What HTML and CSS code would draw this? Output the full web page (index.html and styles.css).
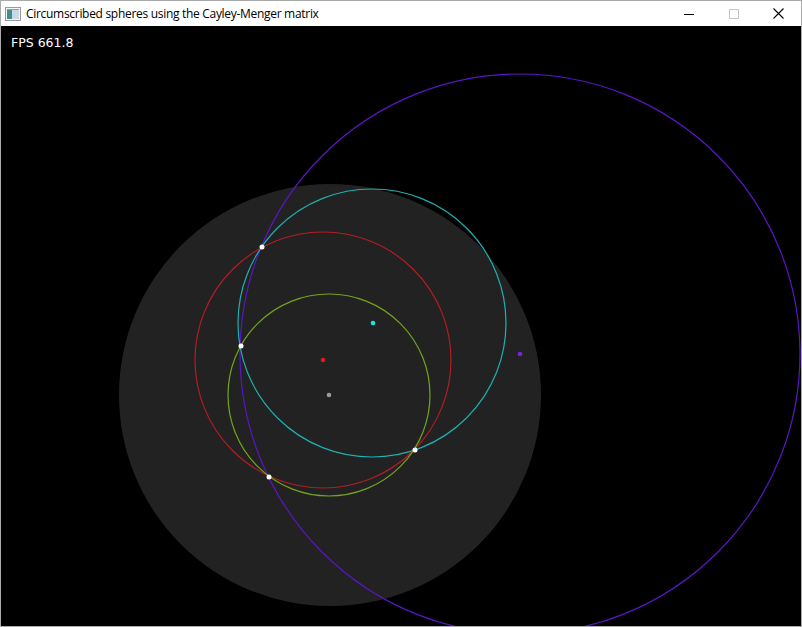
FILE: index.html
```html
<!DOCTYPE html>
<html>
<head>
<meta charset="utf-8">
<link rel="stylesheet" href="styles.css">
</head>
<body>
<div class="window">
  <div class="titlebar">
    <svg class="app-icon" width="16" height="16" viewBox="0 0 16 16">
      <rect x="0.5" y="1.5" width="15" height="13" fill="#f4f4f4" stroke="#9a9a9a"/>
      <rect x="2" y="4" width="5" height="9" fill="#3f8f8a"/>
      <rect x="7" y="4" width="7" height="9" fill="#c9d7e6"/>
      <rect x="2" y="3" width="12" height="1" fill="#7aa7c7"/>
    </svg>
    <span class="title">Circumscribed spheres using the Cayley-Menger matrix</span>
    <div class="controls">
      <div class="ctl"><svg width="10" height="10" viewBox="0 0 10 10"><line x1="0" y1="5.5" x2="10" y2="5.5" stroke="#000" stroke-width="1"/></svg></div>
      <div class="ctl"><svg width="10" height="10" viewBox="0 0 10 10"><rect x="0.5" y="0.5" width="9" height="9" fill="none" stroke="#c8c8c8"/></svg></div>
      <div class="ctl"><svg width="11" height="11" viewBox="0 0 11 11"><path d="M0.5 0.5 L10.5 10.5 M10.5 0.5 L0.5 10.5" stroke="#000" stroke-width="1.1"/></svg></div>
    </div>
  </div>
  <div class="canvas">
    <svg class="scene" width="800" height="600" viewBox="0 0 800 600">
      <circle cx="329" cy="369" r="211" fill="#222222"/>
      <g fill="none" stroke-width="1.2">
        <circle cx="519" cy="328" r="280" stroke="#5a16c6"/>
        <circle cx="371" cy="297" r="134" stroke="#1fb0b0"/>
        <circle cx="322" cy="334" r="128" stroke="#b21e24"/>
        <circle cx="328" cy="369" r="101" stroke="#72a41c"/>
      </g>
      <g fill="#ffffff">
        <circle cx="261" cy="221" r="2.5"/>
        <circle cx="240" cy="320" r="2.5"/>
        <circle cx="414" cy="424" r="2.5"/>
        <circle cx="268" cy="451" r="2.5"/>
      </g>
      <circle cx="372" cy="297" r="2.3" fill="#10e8e8"/>
      <circle cx="322" cy="334" r="2.3" fill="#e01818"/>
      <circle cx="328" cy="369" r="2.3" fill="#9a9a9a"/>
      <circle cx="519" cy="328" r="2.3" fill="#7a22e0"/>
    </svg>
    <div class="fps">FPS 661.8</div>
  </div>
</div>
</body>
</html>
```
FILE: styles.css
```css
html, body {
  margin: 0;
  padding: 0;
  background: #ffffff;
}
.window {
  width: 800px;
  height: 625px;
  border: 1px solid #aaaaaa;
  display: flex;
  flex-direction: column;
}
.titlebar {
  height: 25px;
  background: #ffffff;
  display: flex;
  align-items: center;
  font-family: "Open Sans", "Liberation Sans", sans-serif;
  font-size: 12px;
  color: #000;
}
.app-icon {
  margin-left: 4px;
  margin-right: 5px;
}
.title {
  flex: 1;
  white-space: nowrap;
  letter-spacing: -0.3px;
}
.controls {
  display: flex;
  height: 25px;
}
.ctl {
  width: 45px;
  height: 25px;
  display: flex;
  align-items: center;
  justify-content: center;
}
.canvas {
  position: relative;
  width: 800px;
  height: 600px;
  background: #000000;
  overflow: hidden;
}
.scene {
  display: block;
}
.fps {
  position: absolute;
  left: 10px;
  top: 9px;
  color: #ffffff;
  font-family: "DejaVu Sans", sans-serif;
  font-size: 12.5px;
}
```
